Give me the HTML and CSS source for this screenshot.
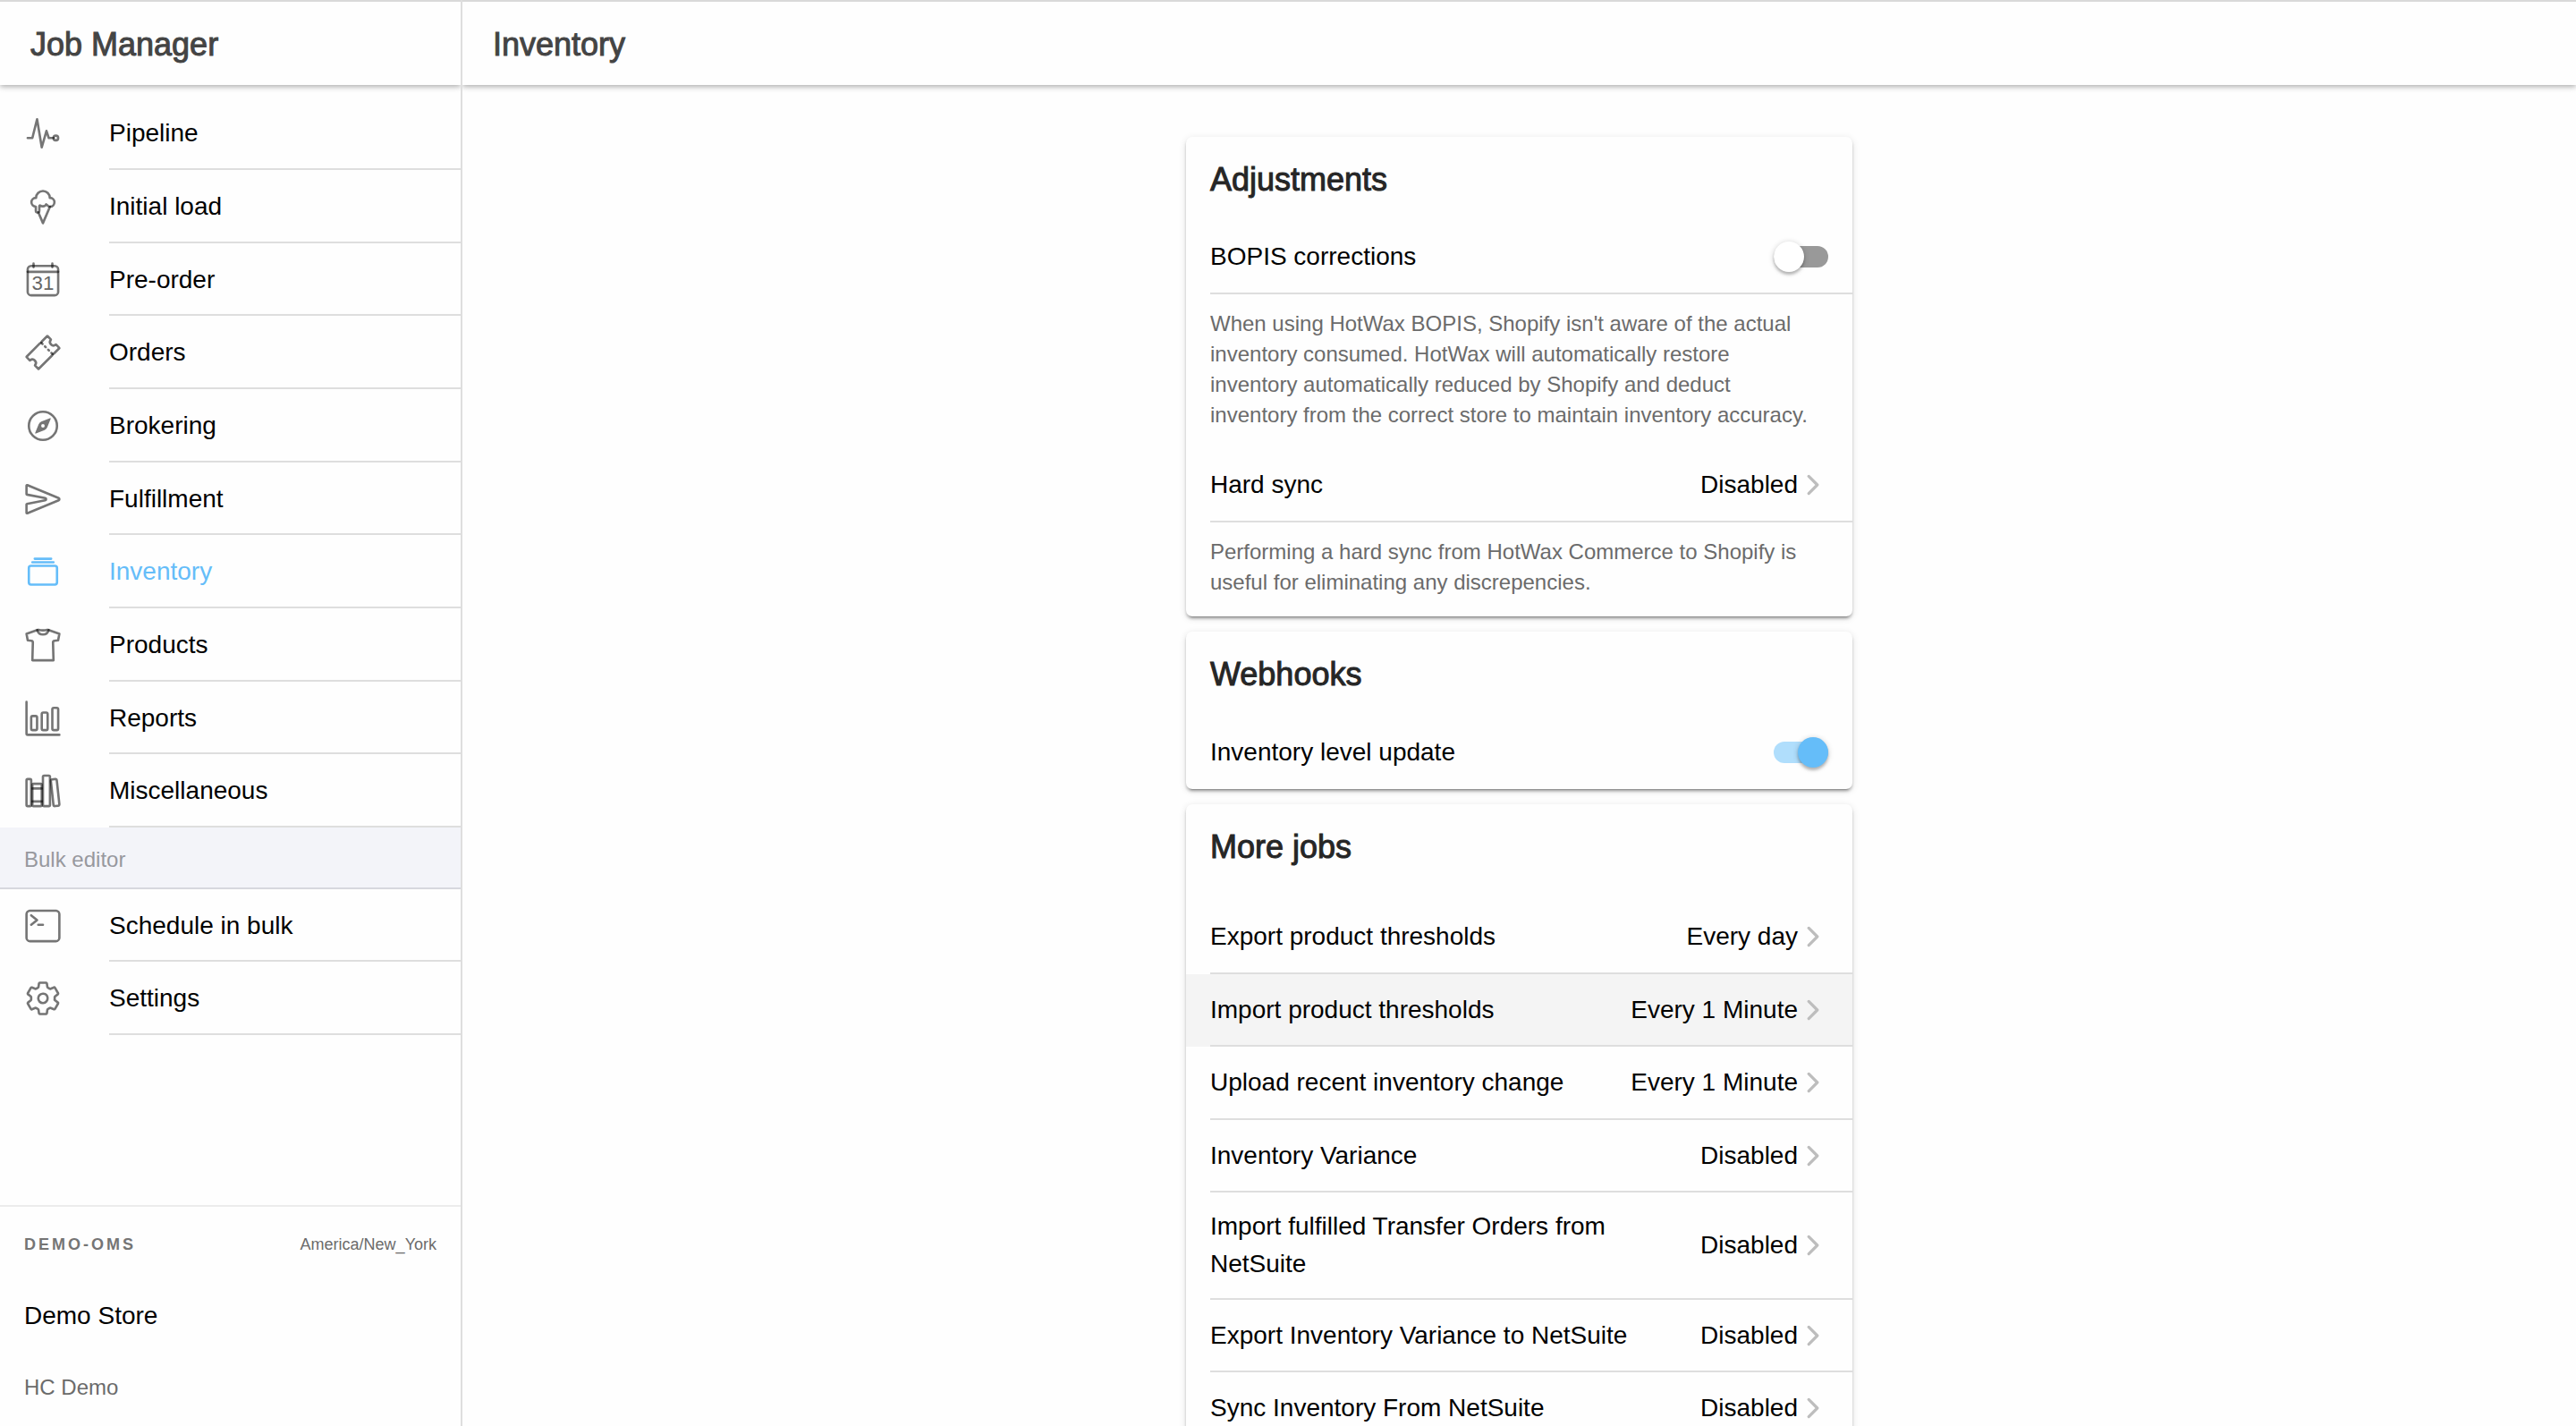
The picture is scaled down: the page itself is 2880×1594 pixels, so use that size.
FILE: index.html
```html
<!DOCTYPE html>
<html lang="en">
<head>
<meta charset="utf-8">
<title>Job Manager</title>
<meta name="viewport" content="width=device-width, initial-scale=1">
<link rel="stylesheet" href="styles.css">
</head>
<body>
<div class="app">
  <aside class="menu">
    <header class="toolbar"><h1 class="toolbar-title">Job Manager</h1></header>
    <nav class="menu-content">
      <ul class="menu-list">
        <li><a class="menu-item" href="#pipeline">
          <svg class="icon" viewBox="0 0 512 512"><path d="M48 320h64l64-256 64 384 64-224 32 96h64"/><circle cx="432" cy="320" r="32"/></svg>
          <span class="menu-label">Pipeline</span></a></li>
        <li><a class="menu-item" href="#initial-load">
          <svg class="icon" viewBox="0 0 512 512"><path d="M352 256l-96 224-62-145"/><path d="M183 336a24 24 0 0 1-24-24v-56c-32-3-60-28-60-60a60 60 0 0 1 60-60h3a94 94 0 0 1 188 0h3a60 60 0 0 1 60 60c0 32-26 60-58 60-14 0-22-2-31-12-8-9-13-16-24-20-6 16-22 28-44 28-13 0-24-4-33-10-7-4-16-2-16 8v62a24 24 0 0 1-24 24z"/></svg>
          <span class="menu-label">Initial load</span></a></li>
        <li><a class="menu-item" href="#pre-order">
          <svg class="icon" viewBox="0 0 512 512"><rect x="48" y="64" width="416" height="400" rx="48"/><path d="M128 32v48M384 32v48M464 144H48"/><text class="icon-day" x="256" y="390">31</text></svg>
          <span class="menu-label">Pre-order</span></a></li>
        <li><a class="menu-item" href="#orders">
          <svg class="icon" viewBox="0 0 512 512"><path d="M366.05 146a46.7 46.7 0 01-2.42-63.42 3.87 3.87 0 00-.22-5.26l-44.13-44.18a3.89 3.89 0 00-5.5 0l-70.34 70.34a23.62 23.62 0 00-5.71 9.24 23.66 23.66 0 01-14.95 15 23.7 23.7 0 00-9.25 5.71L33.14 313.78a3.89 3.89 0 000 5.5l44.13 44.13a3.87 3.87 0 005.26.22 46.69 46.69 0 0165.84 65.84 3.87 3.87 0 00.22 5.26l44.13 44.13a3.89 3.89 0 005.5 0l180.4-180.39a23.7 23.7 0 005.71-9.25 23.66 23.66 0 0114.95-15 23.62 23.62 0 009.24-5.71l70.34-70.34a3.89 3.89 0 000-5.5l-44.13-44.13a3.87 3.87 0 00-5.26-.22 46.7 46.7 0 01-63.42-2.32z"/><path d="M250.5 140.44l-16.51-16.51M294.52 184.46l-11-11M338.54 228.49l-11-11M388.07 278.01l-16.51-16.51"/></svg>
          <span class="menu-label">Orders</span></a></li>
        <li><a class="menu-item" href="#brokering">
          <svg class="icon" viewBox="0 0 512 512"><circle cx="256" cy="256" r="192"/><path class="icon-fill" d="M350.67 150.93l-117.2 46.88a64 64 0 00-35.66 35.66l-46.88 117.2a8 8 0 0010.4 10.4l117.2-46.88a64 64 0 0035.66-35.66l46.88-117.2a8 8 0 00-10.4-10.4zM256 280a24 24 0 1124-24 24 24 0 01-24 24z"/></svg>
          <span class="menu-label">Brokering</span></a></li>
        <li><a class="menu-item" href="#fulfillment">
          <svg class="icon" viewBox="0 0 512 512"><path d="M470.3 271.15L43.16 447.31a7.83 7.83 0 01-11.16-7V327a8 8 0 016.51-7.86l247.62-47c17.36-3.29 17.36-28.15 0-31.44l-247.63-47a8 8 0 01-6.5-7.85V72.59c0-5.74 5.88-10.26 11.16-8L470.3 241.76a16 16 0 010 29.39z"/></svg>
          <span class="menu-label">Fulfillment</span></a></li>
        <li><a class="menu-item menu-item-active" href="#inventory" aria-current="page">
          <svg class="icon" viewBox="0 0 512 512"><rect x="64" y="176" width="384" height="256" rx="29"/><path d="M144 80h224M112 128h288"/></svg>
          <span class="menu-label">Inventory</span></a></li>
        <li><a class="menu-item" href="#products">
          <svg class="icon" viewBox="0 0 512 512"><path d="M314.56 48s-22.78 8-58.56 8-58.56-8-58.56-8a31.94 31.94 0 00-10.57 1.8L32 104l16.63 88 48.88 5.52a24 24 0 0121.29 24.58L112 464h288l-6.8-241.9a24 24 0 0121.29-24.58l48.88-5.52L480 104 325.13 49.8a31.94 31.94 0 00-10.57-1.8z"/><path d="M333.31 52.66a80 80 0 01-154.62 0"/></svg>
          <span class="menu-label">Products</span></a></li>
        <li><a class="menu-item" href="#reports">
          <svg class="icon" viewBox="0 0 512 512"><path d="M32 32v432a16 16 0 0016 16h432"/><rect x="96" y="224" width="80" height="192" rx="20"/><rect x="240" y="176" width="80" height="240" rx="20"/><rect x="384" y="112" width="80" height="304" rx="20"/></svg>
          <span class="menu-label">Reports</span></a></li>
        <li><a class="menu-item" href="#miscellaneous">
          <svg class="icon" viewBox="0 0 512 512"><rect x="32" y="96" width="64" height="368" rx="16"/><path d="M112 224h128M112 400h128"/><rect x="112" y="160" width="128" height="304" rx="16"/><rect x="256" y="48" width="96" height="416" rx="16"/><path d="M422.46 96.11l-40.4 4.25c-11.12 1.17-19.18 11.57-17.93 23.1l34.92 321.59c1.26 11.53 11.37 20 22.49 18.84l40.4-4.25c11.12-1.17 19.18-11.57 17.93-23.1L445 115c-1.31-11.58-11.42-20.06-22.54-18.89z"/></svg>
          <span class="menu-label">Miscellaneous</span></a></li>
      </ul>
      <h2 class="menu-divider">Bulk editor</h2>
      <ul class="menu-list menu-list-bulk">
        <li><a class="menu-item" href="#bulk">
          <svg class="icon" viewBox="0 0 512 512"><rect x="32" y="48" width="448" height="416" rx="48"/><path d="M96 112l80 64-80 64M192 240h64"/></svg>
          <span class="menu-label">Schedule in bulk</span></a></li>
        <li><a class="menu-item" href="#settings">
          <svg class="icon" viewBox="0 0 512 512"><path d="M262.29 192.31a64 64 0 1057.4 57.4 64.13 64.13 0 00-57.4-57.4zM416.39 256a154.34 154.34 0 01-1.53 20.79l45.21 35.46a10.81 10.81 0 012.45 13.75l-42.77 74a10.81 10.81 0 01-13.14 4.59l-44.9-18.08a16.11 16.11 0 00-15.17 1.75A164.48 164.48 0 01325 400.8a15.94 15.94 0 00-8.82 12.14l-6.73 47.89a11.08 11.08 0 01-10.68 9.17h-85.54a11.11 11.11 0 01-10.69-8.87l-6.72-47.82a16.07 16.07 0 00-9-12.22 155.3 155.3 0 01-21.46-12.57 16 16 0 00-15.11-1.71l-44.89 18.07a10.81 10.81 0 01-13.14-4.58l-42.77-74a10.8 10.8 0 012.45-13.75l38.21-30a16.05 16.05 0 006-14.08c-.36-4.17-.58-8.33-.58-12.5s.21-8.27.58-12.35a16 16 0 00-6.07-13.94l-38.19-30A10.81 10.81 0 0149.48 186l42.77-74a10.81 10.81 0 0113.14-4.59l44.9 18.08a16.11 16.11 0 0015.17-1.75A164.48 164.48 0 01187 111.2a15.94 15.94 0 008.82-12.14l6.73-47.89A11.08 11.08 0 01213.23 42h85.54a11.11 11.11 0 0110.69 8.87l6.72 47.82a16.07 16.07 0 009 12.22 155.3 155.3 0 0121.46 12.57 16 16 0 0015.11 1.71l44.89-18.07a10.81 10.81 0 0113.14 4.58l42.77 74a10.8 10.8 0 01-2.45 13.75l-38.21 30a16.05 16.05 0 00-6.05 14.08c.33 4.14.55 8.3.55 12.47z"/></svg>
          <span class="menu-label">Settings</span></a></li>
      </ul>
    </nav>
    <footer class="menu-footer">
      <div class="footer-row"><span class="overline">DEMO-OMS</span><span class="timezone">America/New_York</span></div>
      <div class="footer-row"><span>Demo Store</span></div>
      <div class="footer-row"><span class="note">HC Demo</span></div>
    </footer>
  </aside>

  <div class="page">
    <header class="toolbar"><h1 class="toolbar-title">Inventory</h1></header>
    <main class="page-content">
      <section class="card">
        <h2 class="card-title">Adjustments</h2>
        <label class="row"><span class="row-body row-line"><span class="row-label">BOPIS corrections</span><input class="toggle" type="checkbox" role="switch"></span></label>
        <p class="help">When using HotWax BOPIS, Shopify isn't aware of the actual inventory consumed. HotWax will automatically restore inventory automatically reduced by Shopify and deduct inventory from the correct store to maintain inventory accuracy.</p>
        <button class="row" type="button"><span class="row-body row-line"><span class="row-label">Hard sync</span><span class="row-value">Disabled</span><svg class="chevron" viewBox="0 0 512 512"><path d="M184 112l144 144-144 144"/></svg></span></button>
        <p class="help">Performing a hard sync from HotWax Commerce to Shopify is useful for eliminating any discrepencies.</p>
      </section>

      <section class="card">
        <h2 class="card-title">Webhooks</h2>
        <label class="row"><span class="row-body"><span class="row-label">Inventory level update</span><input class="toggle" type="checkbox" role="switch" checked></span></label>
      </section>

      <section class="card">
        <h2 class="card-title">More jobs</h2>
        <div class="job-list">
          <button class="row" type="button"><span class="row-body row-line"><span class="row-label">Export product thresholds</span><span class="row-value">Every day</span><svg class="chevron" viewBox="0 0 512 512"><path d="M184 112l144 144-144 144"/></svg></span></button>
          <button class="row row-hover" type="button"><span class="row-body row-line"><span class="row-label">Import product thresholds</span><span class="row-value">Every 1 Minute</span><svg class="chevron" viewBox="0 0 512 512"><path d="M184 112l144 144-144 144"/></svg></span></button>
          <button class="row" type="button"><span class="row-body row-line"><span class="row-label">Upload recent inventory change</span><span class="row-value">Every 1 Minute</span><svg class="chevron" viewBox="0 0 512 512"><path d="M184 112l144 144-144 144"/></svg></span></button>
          <button class="row" type="button"><span class="row-body row-line"><span class="row-label">Inventory Variance</span><span class="row-value">Disabled</span><svg class="chevron" viewBox="0 0 512 512"><path d="M184 112l144 144-144 144"/></svg></span></button>
          <button class="row" type="button"><span class="row-body row-line"><span class="row-label">Import fulfilled Transfer Orders from NetSuite</span><span class="row-value">Disabled</span><svg class="chevron" viewBox="0 0 512 512"><path d="M184 112l144 144-144 144"/></svg></span></button>
          <button class="row" type="button"><span class="row-body row-line"><span class="row-label">Export Inventory Variance to NetSuite</span><span class="row-value">Disabled</span><svg class="chevron" viewBox="0 0 512 512"><path d="M184 112l144 144-144 144"/></svg></span></button>
          <button class="row" type="button"><span class="row-body row-line"><span class="row-label">Sync Inventory From NetSuite</span><span class="row-value">Disabled</span><svg class="chevron" viewBox="0 0 512 512"><path d="M184 112l144 144-144 144"/></svg></span></button>
        </div>
      </section>
    </main>
  </div>
</div>
</body>
</html>
```

FILE: styles.css
```css
:root {
  --primary: #65bdf9;
  --line: #dedede;
  --muted: #6b6b6b;
}

* {
  box-sizing: border-box;
}

body {
  margin: 0;
  background: #fefefe;
  color: #000;
  font: 28px/42px "Liberation Sans", Arial, sans-serif;
}

h1, h2, p, ul {
  margin: 0;
  padding: 0;
  font-weight: 400;
}

ul {
  list-style: none;
}

.app {
  display: flex;
  height: 100vh;
}

/* Shared header */
.toolbar {
  flex: none;
  display: flex;
  align-items: center;
  height: 95px;
  padding: 2px 34px 0;
  border-top: 2px solid #d9d9d9;
  background: #fefefe;
  box-shadow: 0 2px 6px rgba(0, 0, 0, 0.32);
}

.toolbar-title {
  font-size: 36px;
  color: #444;
  -webkit-text-stroke: 1px #444;
}

/* Side menu; overflow and background keep the page header's shadow off its edge */
.menu {
  z-index: 1;
  flex: none;
  display: flex;
  flex-direction: column;
  width: 517px;
  overflow: hidden;
  border-right: 2px solid var(--line);
  background: #fefefe;
}

.menu-content {
  flex: 1;
  min-height: 0;
  padding-top: 13px;
}

.menu-list {
  display: grid;
  grid-auto-rows: 82px 82px 81px;
}

.menu-list-bulk {
  grid-auto-rows: 81px 82px;
}

.menu-item {
  display: flex;
  gap: 53px;
  height: 100%;
  padding-left: 27px;
  color: inherit;
  text-decoration: none;
}

.menu-label {
  flex: 1;
  display: flex;
  align-items: center;
  padding-top: 2px;
  border-bottom: 2px solid var(--line);
}

.icon {
  flex: none;
  align-self: center;
  width: 42px;
  height: 42px;
  fill: none;
  stroke: rgba(0, 0, 0, 0.54);
  stroke-width: 32;
  stroke-linecap: round;
  stroke-linejoin: round;
}

.icon-fill {
  fill: rgba(0, 0, 0, 0.54);
  stroke: none;
}

.icon-day {
  fill: #666;
  stroke: none;
  font-size: 272px;
  text-anchor: middle;
}

.menu-item-active {
  color: var(--primary);
}

.menu-item-active .icon {
  stroke: var(--primary);
}

.menu-divider {
  display: flex;
  align-items: center;
  height: 69px;
  padding: 4px 27px 0;
  border-bottom: 2px solid #d7d8de;
  background: #f3f4f9;
  color: #97989e;
  font-size: 24px;
}

.menu-footer {
  flex: none;
  padding: 2px 27px 3px;
  border-top: 2px solid #ececec;
}

.footer-row {
  display: flex;
  align-items: center;
  justify-content: space-between;
  height: 80px;
}

.overline {
  color: #757575;
  font-size: 18px;
  font-weight: 700;
  letter-spacing: 3px;
}

.timezone {
  color: var(--muted);
  font-size: 18px;
}

.note {
  color: var(--muted);
  font-size: 24px;
}

/* Page */
.page {
  flex: 1;
  display: flex;
  flex-direction: column;
  min-width: 0;
}

.page-content {
  flex: 1;
  display: flex;
  flex-direction: column;
  align-items: center;
  gap: 17px;
  min-height: 0;
  padding: 58px 27px;
  overflow-y: auto;
  scrollbar-width: none;
}

.card {
  flex: none;
  width: 100%;
  max-width: 745px;
  border-radius: 7px;
  background: #fefefe;
  box-shadow: 0 5px 2px -4px rgba(0, 0, 0, 0.3), 0 3px 3px rgba(0, 0, 0, 0.2), 0 2px 9px rgba(0, 0, 0, 0.12);
}

.card-title {
  display: flex;
  align-items: center;
  height: 94px;
  padding: 2px 27px 0;
  color: #262626;
  font-size: 36px;
  -webkit-text-stroke: 1px #262626;
}

.job-list {
  display: grid;
  grid-auto-rows: minmax(82px, auto) minmax(81px, auto);
  padding: 14px 0;
}

.row {
  display: flex;
  width: 100%;
  min-height: 82px;
  padding: 0 0 0 27px;
  border: 0;
  background: none;
  color: inherit;
  font: inherit;
  text-align: left;
}

.job-list .row {
  min-height: 0;
}

.row-hover {
  background: #f4f4f4;
}

.row-body {
  flex: 1;
  display: flex;
  align-items: center;
  padding: 17px 27px 17px 0;
}

.row-line {
  border-bottom: 2px solid var(--line);
}

.row-label {
  flex: 1;
}

.row-value {
  padding-left: 24px;
}

.chevron {
  flex: none;
  width: 34px;
  height: 34px;
  fill: none;
  stroke: #bdbdbd;
  stroke-width: 48;
  stroke-linecap: round;
  stroke-linejoin: round;
}

.help {
  padding: 16px 38px 21px 27px;
  color: var(--muted);
  font-size: 24px;
  line-height: 34px;
}

/* Switch: track and knob share one grid cell */
.toggle {
  appearance: none;
  display: grid;
  align-items: center;
  width: 61px;
  height: 34px;
  margin: 0;
}

.toggle::before,
.toggle::after {
  content: "";
  grid-area: 1 / 1;
}

.toggle::before {
  height: 24px;
  border-radius: 12px;
  background: #999;
}

.toggle::after {
  width: 34px;
  height: 34px;
  border-radius: 50%;
  background: #fff;
  box-shadow: 0 3px 3px rgba(0, 0, 0, 0.2), 0 1px 6px rgba(0, 0, 0, 0.2);
}

.toggle:checked::before {
  background: #b0defc;
}

.toggle:checked::after {
  justify-self: end;
  background: var(--primary);
}
```
